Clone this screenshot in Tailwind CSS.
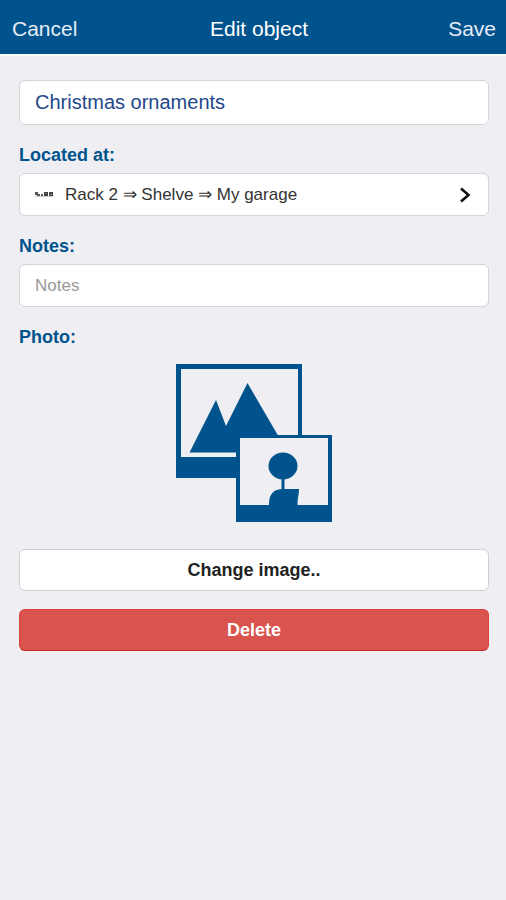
<!DOCTYPE html>
<html lang="en">
<head>
<meta charset="utf-8">
<meta name="viewport" content="width=device-width, initial-scale=1">
<title>Edit object</title>
<script src="https://cdn.jsdelivr.net/npm/@tailwindcss/browser@4"></script>
</head>
<body class="min-h-screen bg-[#efeef3] font-['Liberation_Sans',Arial,sans-serif] text-[#00538c]">
<header class="grid h-14 grid-cols-[1fr_auto_1fr] items-center border-b-2 border-[#fbfbfd] bg-[#00538c] pr-[10px] pl-3 pt-1 text-[21px] leading-6 text-[#e6ecf8]">
  <button type="button" class="justify-self-start">Cancel</button>
  <h1 class="pl-[10px] text-white">Edit object</h1>
  <button type="button" class="justify-self-end">Save</button>
</header>
<main class="pt-6 pr-[17px] pl-[19px]">
  <form class="flex flex-col">
    <input type="text" aria-label="Name" value="Christmas ornaments" class="h-[45px] w-full rounded-md border border-[#d5d5d9] bg-white px-[15px] text-[20px] text-[#23478a]">

    <label for="location" class="mt-[18px] text-[18px] leading-6 font-bold">Located at:</label>
    <button id="location" type="button" class="mt-[6px] flex h-[43px] items-center rounded-md border border-[#d5d5d9] bg-white px-[15px] text-left text-[17px] text-[#333]">
      <svg class="mr-3 h-2 w-[18px] shrink-0" viewBox="0 0 18 8" aria-hidden="true">
        <path d="M0 1h3v3H0zM2 3h3v2H2zM6 3h2v2H6z" fill="#555"/>
        <path d="M9 1h4v4H9zM14 1h4v4h-4z" fill="#444"/>
        <path d="M10 2h1v1h-1zM15 3h2v1h-2z" fill="#888"/>
        <path d="M0 5h18v1H0z" fill="#ccc"/>
      </svg>
      <span class="flex-1">Rack 2 ⇒ Shelve ⇒ My garage</span>
      <svg class="mr-0.5 h-4 w-3 shrink-0" viewBox="0 0 12 16" fill="none" stroke="#111" stroke-width="2.6" aria-hidden="true"><path d="M2 1.5 9.5 8 2 14.5"/></svg>
    </button>

    <label for="notes" class="mt-[18px] text-[18px] leading-6 font-bold">Notes:</label>
    <input id="notes" type="text" placeholder="Notes" class="mt-[6px] h-[43px] w-full rounded-md border border-[#d5d5d9] bg-white px-[15px] text-[17px] text-[#23478a] placeholder:text-[#999]">

    <h2 class="mt-[18px] text-[18px] leading-6 font-bold">Photo:</h2>
    <svg class="mt-[14px] h-[160px] w-[156px] self-center" viewBox="0 0 156 160" role="img" aria-label="Placeholder photo">
      <path fill="#00538c" fill-rule="evenodd" d="M0 1h126v114H0zM5 6v88h117V6z"/>
      <path fill="#00538c" d="M13.500 89.500 40 37l10 26 21.500-43L104 76v13.500z"/>
      <path fill="#00538c" d="M60 72h96v87H60z"/>
      <path fill="#efeef3" d="M64 75h88v67H64z"/>
      <ellipse cx="107" cy="103" rx="14.500" ry="13.500" fill="#00538c"/>
      <path fill="#00538c" d="M105.500 115h3v12h-3zM93 142c0-8 2-15 12-16h18c0 6-1.500 8-1.500 17H93z"/>
    </svg>

    <button type="button" class="mt-[26px] h-[42px] rounded-md border border-[#d0d0d4] bg-white text-[18px] font-bold text-[#222]">Change image..</button>
    <button type="button" class="mt-[18px] h-[42px] rounded-md border border-[#d9423f] border-b-[#c12e2a] bg-[#d9534f] text-[18px] font-bold text-white">Delete</button>
  </form>
</main>
</body>
</html>
